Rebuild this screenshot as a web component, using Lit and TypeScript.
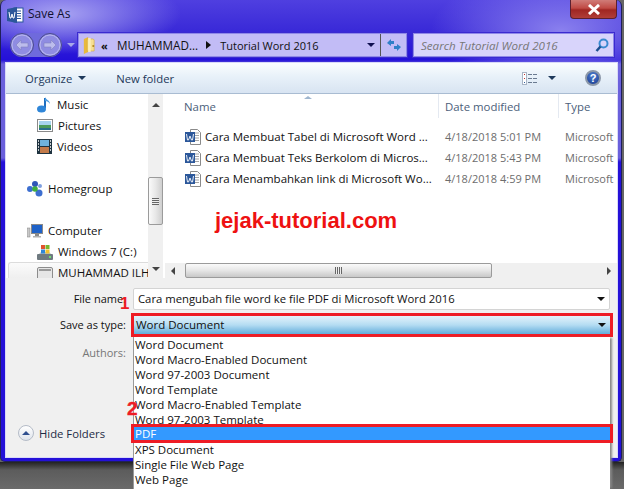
import { LitElement, html, css } from 'lit';
import { customElement } from 'lit/decorators.js';

const wordBadge = html`
  <svg width="17" height="16" viewBox="0 0 17 16">
    <rect x="7" y="1" width="9" height="14" fill="#fff" stroke="#2b579a"/>
    <path d="M9 4h5M9 6.500h5M9 9h5M9 11.500h5" stroke="#2b579a"/>
    <path d="M0 2l10-2v16L0 14z" fill="#2b579a"/>
    <path d="M2 5l1 6h1l1-4 1 4h1l1-6" fill="none" stroke="#fff"/>
  </svg>`;

const docIcon = html`
  <svg width="17" height="16" viewBox="0 0 17 16">
    <path d="M5.500.5h7l3 3v12h-10z" fill="#fff" stroke="#8a8a8a"/>
    <path d="M10 4h4M10 6.500h4M10 9h4M10 11.500h4" stroke="#a4a4a4"/>
    <rect x="0" y="3" width="10" height="10" fill="#2b579a"/>
    <path d="M1.500 5l1 6h1l1.500-4 1.500 4h1l1-6" fill="none" stroke="#fff" stroke-width=".9"/>
  </svg>`;

const folderIcon = html`
  <svg width="12" height="17" viewBox="0 0 14 17" preserveAspectRatio="none">
    <path d="M1 2l5-2v15l-5 2z" fill="#e8b93c"/>
    <path d="M5 2h7l1 1v11H5z" fill="#f6df93" stroke="#d4a62c" stroke-width=".6"/>
    <rect x="6" y="1" width="3" height="14" fill="#fbeeb8"/>
    <rect x="11" y="8" width="2" height="2" fill="#b98f22"/>
  </svg>`;

const musicIcon = html`
  <svg width="15" height="16" viewBox="0 0 15 16">
    <path d="M8 1v10" stroke="#1f6fc0" stroke-width="2"/>
    <path d="M8 0c1 3 5 3 5 7-1-2-3-3-5-3z" fill="#4a9be0"/>
    <ellipse cx="4.500" cy="12" rx="4.500" ry="3.500" fill="#2f86d8"/>
  </svg>`;

const picturesIcon = html`
  <svg width="16" height="13" viewBox="0 0 16 13">
    <rect x=".5" y=".5" width="15" height="12" fill="#fff" stroke="#8a8a8a"/>
    <rect x="2" y="2" width="12" height="5" fill="#a8d4ee"/>
    <rect x="2" y="6" width="12" height="3" fill="#4c9a5a"/>
    <rect x="2" y="9" width="12" height="2" fill="#2a6f8c"/>
  </svg>`;

const videosIcon = html`
  <svg width="15" height="15" viewBox="0 0 15 15">
    <rect width="15" height="15" fill="#1f3340"/>
    <rect x="3" y="1" width="9" height="6" fill="#6fb2dc"/>
    <rect x="3" y="8" width="9" height="6" fill="#c27a4a"/>
    <path d="M1 2h1M1 5h1M1 8h1M1 11h1M13 2h1M13 5h1M13 8h1M13 11h1" stroke="#fff" stroke-width="1.400"/>
  </svg>`;

const homegroupIcon = html`
  <svg width="16" height="16" viewBox="0 0 16 16">
    <circle cx="3" cy="8" r="3" fill="#3d6fd0"/>
    <circle cx="8" cy="3" r="3" fill="#2f55b8"/>
    <circle cx="12" cy="12" r="3.500" fill="#3d6fd0"/>
    <circle cx="8" cy="8" r="2.800" fill="#3fae3f"/>
    <circle cx="13" cy="5" r="2" fill="#7fa0e0"/>
  </svg>`;

const computerIcon = html`
  <svg width="16" height="14" viewBox="0 0 16 14">
    <rect x="0" y="4" width="3" height="9" fill="#c8c8c8" stroke="#808080" stroke-width=".5"/>
    <rect x="4.500" y=".5" width="11" height="9" fill="#1f62c8" stroke="#8a8a8a"/>
    <rect x="8" y="10" width="4" height="2" fill="#8a8a8a"/>
    <rect x="6" y="12" width="8" height="1.500" fill="#b0b0b0"/>
  </svg>`;

const driveIcon = html`
  <svg width="16" height="16" viewBox="0 0 16 16">
    <rect x="0" y="10" width="16" height="6" rx="1" fill="#6f7a80"/>
    <rect x="12" y="12" width="2" height="2" fill="#6fe06f"/>
    <path d="M2 10l2-2h8l2 2z" fill="#b8c0c4"/>
    <rect x="4" y="1" width="4" height="4" fill="#e2532f"/>
    <rect x="8.500" y="1" width="4" height="4" fill="#7ab82e"/>
    <rect x="4" y="5.500" width="4" height="4" fill="#2f86d8"/>
    <rect x="8.500" y="5.500" width="4" height="4" fill="#f2c12e"/>
  </svg>`;

const removableIcon = html`
  <svg width="16" height="16" viewBox="0 0 16 16">
    <rect x=".5" y="2.500" width="15" height="12" rx="1.500" fill="#e6e6e6" stroke="#8c8c8c"/>
    <rect x="2" y="4" width="12" height="2" fill="#9a9a9a"/>
  </svg>`;

const navArrow = (flip: boolean) => html`
  <svg width="24" height="24" viewBox="0 0 24 24">
    <circle cx="12" cy="12" r="11.500" fill="#8f8ce2" stroke="#4a4a8c"/>
    <circle cx="12" cy="12" r="10" fill="none" stroke="#c4c4f0" stroke-width=".8"/>
    <path transform=${flip ? 'matrix(-1 0 0 1 24 0)' : ''}
      d="M6 12l5-5v3h7v4h-7v3z" fill="#bcbcec" stroke="#7f7fc0" stroke-width=".6"/>
  </svg>`;

const navItems = [
  { label: 'Music', icon: musicIcon, level: 1 },
  { label: 'Pictures', icon: picturesIcon, level: 1 },
  { label: 'Videos', icon: videosIcon, level: 1 },
  { label: '', icon: null, level: 0 },
  { label: 'Homegroup', icon: homegroupIcon, level: 0 },
  { label: '', icon: null, level: 0 },
  { label: 'Computer', icon: computerIcon, level: 0 },
  { label: 'Windows 7 (C:)', icon: driveIcon, level: 1 },
  { label: 'MUHAMMAD ILH', icon: removableIcon, level: 1, hover: true },
];

const files = [
  { name: 'Cara Membuat Tabel di Microsoft Word ...', date: '4/18/2018 5:01 PM' },
  { name: 'Cara Membuat Teks Berkolom di Micros...', date: '4/18/2018 5:43 PM' },
  { name: 'Cara Menambahkan link di Microsoft Wo...', date: '4/18/2018 4:59 PM' },
];

const fileTypes = [
  'Word Document',
  'Word Macro-Enabled Document',
  'Word 97-2003 Document',
  'Word Template',
  'Word Macro-Enabled Template',
  'Word 97-2003 Template',
  'PDF',
  'XPS Document',
  'Single File Web Page',
  'Web Page',
];

@customElement('app-root')
export class AppRoot extends LitElement {
  static styles = css`
    :host {
      display: flex;
      flex-direction: column;
      position: relative;
      width: 624px;
      height: 489px;
      overflow: hidden;
      background: #666;
      font-family: 'Open Sans', 'Noto Sans', sans-serif;
      font-size: 11.3px;
      color: #111;
    }

    .window {
      box-sizing: border-box;
      width: 622px;
      height: 462px;
      flex: none;
      display: flex;
      flex-direction: column;
      padding: 0 4px 4px 5px;
      border-radius: 6px 6px 5px 5px;
      border: 1px solid #20205a;
      border-top: 0;
      background:
        radial-gradient(ellipse 120px 40px at 60px 14px, #a9a4f2 0%, rgba(140, 130, 240, 0) 100%),
        radial-gradient(ellipse 130px 60px at 560px 30px, #8a80ee 0%, rgba(120, 110, 235, 0) 100%),
        linear-gradient(180deg, #4f3fe0 0%, #3a2ad8 30px, #2410d8 60px, #6a60dc 64px, #6a60dc 158px, #2410d8 162px);
    }

    .desktop {
      flex: 1;
      background: linear-gradient(180deg, #222 0, #5c5c5c 8px, #6a6a6a 100%);
    }

    .titlebar {
      height: 33px;
      flex: none;
      display: flex;
      align-items: flex-start;
      gap: 4px;
      padding: 7px 0 0 1px;
      box-sizing: border-box;
      position: relative;
    }

    .title {
      font-size: 12px;
      line-height: 14px;
      color: #101030;
    }

    .close {
      position: absolute;
      top: 0;
      right: 0;
      width: 47px;
      height: 19px;
      box-sizing: border-box;
      border: 1px solid #5a2030;
      border-top: 0;
      border-radius: 0 0 4px 4px;
      background: linear-gradient(180deg, #d07c78 0%, #c04a44 45%, #a02622 55%, #b03e38 100%);
      display: flex;
      align-items: center;
      justify-content: center;
    }

    .navrow {
      height: 24px;
      flex: none;
      display: flex;
      align-items: center;
      padding-left: 4px;
    }

    .nav-arrows {
      display: flex;
      gap: 4px;
      border-radius: 12px;
      background: #6f6adc;
    }

    .nav-drop {
      width: 0;
      height: 0;
      margin: 0 3px 0 5px;
      border: 4px solid transparent;
      border-top: 4px solid #a8a8e8;
      border-bottom: 0;
    }

    .address {
      width: 329px;
      height: 24px;
      box-sizing: border-box;
      display: flex;
      align-items: center;
      border: 1px solid #8f88e8;
      outline: 1px solid #3a2ad0;
      background: #c2bcf6;
      padding-left: 4px;
      font-size: 12px;
    }

    .chev {
      margin-left: 6px;
      width: 8px;
      font-size: 11px;
      font-weight: 700;
    }

    .crumb {
      margin-left: 8px;
      font-size: 11.7px;
    }

    .tri-right {
      width: 0;
      height: 0;
      margin-left: 8px;
      border: 4px solid transparent;
      border-left: 5px solid #111;
      border-right: 0;
    }

    .crumb-last {
      margin-left: 9px;
      font-size: 11px;
    }

    .addr-drop {
      width: 0;
      height: 0;
      margin-left: auto;
      border: 4px solid transparent;
      border-top: 4px solid #101050;
      border-bottom: 0;
      transform: translateX(-5px);
    }

    .refresh {
      width: 25px;
      height: 22px;
      border-left: 1px solid #555;
      display: flex;
      align-items: center;
      justify-content: center;
    }

    .search {
      width: 201px;
      height: 24px;
      margin-left: 6px;
      box-sizing: border-box;
      display: flex;
      align-items: center;
      justify-content: space-between;
      padding: 0 4px 0 7px;
      border: 1px solid #8f88e8;
      outline: 1px solid #3a2ad0;
      background: #d8d4fb;
      color: #777;
      font-style: italic;
      font-size: 11.6px;
    }

    .client {
      flex: 1;
      min-height: 0;
      margin-top: 6px;
      display: flex;
      flex-direction: column;
      background: #f0f0f0;
      outline: 1px solid #d8d8f8;
    }

    .toolbar {
      height: 31px;
      flex: none;
      box-sizing: border-box;
      display: flex;
      align-items: center;
      padding-left: 19px;
      background: linear-gradient(180deg, #fafdff 0%, #e8f1f9 45%, #d8e4f2 100%);
      border-bottom: 1px solid #a9bcd2;
      color: #1e395b;
    }

    .caret {
      width: 0;
      height: 0;
      margin-left: 6px;
      border: 4px solid transparent;
      border-top: 4px solid #1e395b;
      border-bottom: 0;
    }

    .new-folder {
      margin-left: 30px;
    }

    .view {
      margin-left: auto;
      display: flex;
      align-items: center;
    }

    .view .caret {
      margin-left: 10px;
    }

    .help {
      margin: 0 16px 0 29px;
      width: 16px;
      height: 16px;
      border-radius: 50%;
      box-sizing: border-box;
      border: 2px solid #8b97a8;
      background: radial-gradient(circle at 50% 30%, #4f7fd0, #17398f);
      color: #fff;
      font: 700 11px/12px 'Liberation Sans', sans-serif;
      text-align: center;
    }

    .panes {
      height: 184px;
      flex: none;
      display: flex;
      background: #fff;
    }

    .nav-pane {
      width: 142px;
      flex: none;
      overflow: hidden;
      box-sizing: border-box;
    }

    .nav-item {
      height: 21px;
      display: flex;
      align-items: center;
      gap: 5px;
      font-size: 11.5px;
      white-space: nowrap;
    }

    .nav-item svg {
      flex: none;
    }

    .level-0 {
      padding-left: 21px;
    }

    .level-1 {
      padding-left: 31px;
    }

    .hover {
      margin-left: 2px;
      padding-left: 28px;
      border: 1px solid #dcdcdc;
      border-right: 0;
      border-radius: 3px 0 0 3px;
      box-sizing: border-box;
      background: linear-gradient(180deg, #fbfbfb, #ececec);
    }

    .vscroll {
      width: 15px;
      flex: none;
      margin-right: 2px;
      background: #f0f0f0;
      position: relative;
      display: flex;
      flex-direction: column;
      align-items: center;
      justify-content: space-between;
      padding: 9px 0 7px;
      box-sizing: border-box;
    }

    .up,
    .down {
      width: 0;
      height: 0;
      border: 4px solid transparent;
    }

    .up {
      border-bottom: 4px solid #444;
      border-top: 0;
    }

    .down {
      border-top: 4px solid #444;
      border-bottom: 0;
    }

    .vthumb {
      position: absolute;
      top: 83px;
      left: 0;
      width: 15px;
      height: 48px;
      box-sizing: border-box;
      border: 1px solid #9b9b9b;
      border-radius: 2px;
      background: linear-gradient(90deg, #fafafa, #e8e8e8 50%, #cfcfcf);
      display: flex;
      align-items: center;
      justify-content: center;
    }

    .grip-h {
      width: 7px;
      height: 7px;
      background: repeating-linear-gradient(180deg, #666 0 1px, #eee 1px 2px);
    }

    .files {
      flex: 1;
      min-width: 0;
      display: flex;
      flex-direction: column;
    }

    .grid {
      display: grid;
      grid-template-columns: 273px 120px 1fr;
    }

    .head {
      height: 24px;
      flex: none;
      color: #4c607a;
      font-size: 11.4px;
    }

    .head > div {
      display: flex;
      align-items: center;
      padding-left: 6px;
      position: relative;
    }

    .head > div + div {
      border-left: 1px solid #e4e9f1;
    }

    .head > div:first-child {
      padding-left: 19px;
    }

    .sort {
      position: absolute;
      top: 2px;
      left: 139px;
      width: 0;
      height: 0;
      border: 4px solid transparent;
      border-bottom: 3px solid #9fb6cf;
      border-top: 0;
    }

    .list {
      flex: 1;
      min-height: 0;
      padding-top: 8px;
    }

    .row {
      height: 21px;
      align-items: center;
      color: #6d6d6d;
      white-space: nowrap;
      font-size: 11px;
    }

    .row > div {
      overflow: hidden;
      padding-left: 7px;
    }

    .row .name {
      display: flex;
      align-items: center;
      gap: 3px;
      padding-left: 20px;
      color: #111;
      font-size: 11.5px;
    }

    .hscroll {
      height: 15px;
      flex: none;
      display: flex;
      align-items: center;
      background: #f0f0f0;
    }

    .left,
    .right {
      width: 0;
      height: 0;
      border: 4px solid transparent;
    }

    .left {
      margin-left: 6px;
      border-right: 4px solid #444;
      border-left: 0;
    }

    .right {
      margin-left: auto;
      margin-right: 6px;
      border-left: 4px solid #444;
      border-right: 0;
    }

    .hthumb {
      margin-left: 10px;
      width: 307px;
      height: 15px;
      box-sizing: border-box;
      border: 1px solid #9b9b9b;
      border-radius: 2px;
      background: linear-gradient(180deg, #fafafa, #e6e6e6 50%, #c8c8c8);
      display: flex;
      align-items: center;
      justify-content: center;
    }

    .grip-v {
      width: 7px;
      height: 7px;
      background: repeating-linear-gradient(90deg, #666 0 1px, #eee 1px 2px);
    }

    .form {
      flex: 1;
      min-height: 0;
      display: flex;
      flex-direction: column;
      padding: 10px 7px 16px 0;
    }

    .form-grid {
      display: grid;
      grid-template-columns: 120px 1fr;
      column-gap: 7px;
      row-gap: 6px;
      align-items: center;
    }

    .label {
      text-align: right;
      font-size: 11px;
      padding-bottom: 2px;
    }

    .muted {
      color: #777;
      margin-top: 5px;
    }

    .filename {
      height: 22px;
      box-sizing: border-box;
      display: flex;
      align-items: center;
      justify-content: space-between;
      padding: 0 4px 0 4px;
      background: #fff;
      border: 1px solid #d4d4d4;
      border-radius: 2px;
    }

    .filename .text,
    .combo .text {
      padding-bottom: 2px;
    }

    .filename .down,
    .combo .down {
      border-top-color: #111;
    }

    .combo {
      position: relative;
      height: 18px;
      margin-left: 1px;
      box-sizing: border-box;
      display: flex;
      align-items: center;
      justify-content: space-between;
      padding: 0 4px 0 2px;
      background: linear-gradient(180deg, #e4f3fb 0%, #b4dcf2 50%, #62addb 100%);
      outline: 3px solid #ee1c25;
      font-size: 11.5px;
    }

    .menu {
      position: absolute;
      top: 21px;
      left: -1px;
      right: 0;
      height: 152px;
      box-sizing: border-box;
      background: #fff;
      border-left: 1px solid #9a9a9a;
      box-shadow: 3px 0 2px -1px #888;
      z-index: 2;
    }

    .menu div {
      height: 15px;
      line-height: 15px;
      padding-left: 1px;
      font-size: 11.5px;
      white-space: nowrap;
    }

    .menu .pdf {
      height: 13px;
      line-height: 13px;
      margin-bottom: 2px;
      background: #3399ff;
      color: #fff;
      outline: 3px solid #ee1c25;
      position: relative;
    }

    .hide {
      margin-top: auto;
      margin-left: 12px;
      display: flex;
      align-items: center;
      gap: 5px;
      color: #1e2b45;
    }

    .hide-btn {
      width: 16px;
      height: 16px;
      border-radius: 50%;
      box-sizing: border-box;
      border: 1px solid #b5bcc8;
      background: linear-gradient(180deg, #fff, #dfe4ec);
      display: flex;
      align-items: center;
      justify-content: center;
    }

    .hide-btn i {
      width: 0;
      height: 0;
      border: 4px solid transparent;
      border-bottom: 4px solid #2f4f8f;
      border-top: 0;
    }

    .stamp {
      position: absolute;
      z-index: 3;
      top: 208px;
      left: 215px;
      font: 700 22px/26px 'Liberation Sans', sans-serif;
      color: #ee1111;
    }

    .num {
      position: absolute;
      z-index: 3;
      font: 700 17px/17px 'Liberation Sans', sans-serif;
      color: #ee1c25;
    }

    .num-1 {
      top: 295px;
      left: 120px;
    }

    .num-2 {
      top: 400px;
      left: 127px;
      font-size: 19px;
      -webkit-text-stroke: 0.4px #ee1c25;
    }
  `;

  render() {
    return html`
      <div class="window">
        <div class="titlebar">
          ${wordBadge}
          <span class="title">Save As</span>
          <div class="close">
            <svg width="14" height="11" viewBox="0 0 14 11">
              <path d="M2 1l10 9M12 1L2 10" stroke="#fff" stroke-width="3"/>
            </svg>
          </div>
        </div>

        <div class="navrow">
          <div class="nav-arrows">${navArrow(false)}${navArrow(true)}</div>
          <span class="nav-drop"></span>
          <div class="address">
            ${folderIcon}
            <span class="chev">«</span>
            <span class="crumb">MUHAMMAD...</span>
            <span class="tri-right"></span>
            <span class="crumb-last">Tutorial Word 2016</span>
            <span class="addr-drop"></span>
            <span class="refresh">
              <svg width="16" height="16" viewBox="0 0 16 16">
                <path d="M1 6l4-4v2h3v3H5v2z" fill="#2f7fc8"/>
                <path d="M15 10l-4 4v-2H8V9h3V7z" fill="#2f7fc8"/>
              </svg>
            </span>
          </div>
          <div class="search">
            <span>Search Tutorial Word 2016</span>
            <svg width="14" height="15" viewBox="0 0 14 15">
              <circle cx="8.500" cy="5.500" r="4" fill="none" stroke="#3a8ad0" stroke-width="2"/>
              <path d="M5.500 8.500L1.500 13" stroke="#1c4f8f" stroke-width="2.500"/>
            </svg>
          </div>
        </div>

        <div class="client">
          <div class="toolbar">
            <span>Organize</span>
            <span class="caret"></span>
            <span class="new-folder">New folder</span>
            <div class="view">
              <svg width="16" height="13" viewBox="0 0 16 13">
                <rect x=".5" y=".5" width="4" height="12" fill="#fff" stroke="#a8b4c4"/>
                <path d="M2 2.500h1M2 6.500h1" stroke="#c03030"/>
                <path d="M2 10.500h1" stroke="#3060a0"/>
                <path d="M6 2.500h4M11 2.500h4M6 6.500h4M11 6.500h4M6 10.500h4M11 10.500h4" stroke="#6a7a90"/>
              </svg>
              <span class="caret"></span>
            </div>
            <div class="help">?</div>
          </div>

          <div class="panes">
            <div class="nav-pane">
              ${navItems.map(
                (item) => html`
                  <div class="nav-item level-${item.level} ${item.hover ? 'hover' : ''}">
                    ${item.icon}<span>${item.label}</span>
                  </div>
                `
              )}
            </div>
            <div class="vscroll">
              <span class="up"></span>
              <div class="vthumb"><span class="grip-h"></span></div>
              <span class="down"></span>
            </div>
            <div class="files">
              <div class="grid head">
                <div>Name<span class="sort"></span></div>
                <div>Date modified</div>
                <div>Type</div>
              </div>
              <div class="list">
                ${files.map(
                  (f) => html`
                    <div class="grid row">
                      <div class="name">${docIcon}<span>${f.name}</span></div>
                      <div>${f.date}</div>
                      <div>Microsoft</div>
                    </div>
                  `
                )}
              </div>
              <div class="hscroll">
                <span class="left"></span>
                <div class="hthumb"><span class="grip-v"></span></div>
                <span class="right"></span>
              </div>
            </div>
          </div>

          <div class="form">
            <div class="form-grid">
              <div class="label">File name:</div>
              <div class="filename">
                <span class="text">Cara mengubah file word ke file PDF di Microsoft Word 2016</span>
                <span class="down"></span>
              </div>
              <div class="label">Save as type:</div>
              <div class="combo">
                <span class="text">Word Document</span>
                <span class="down"></span>
                <div class="menu">
                  ${fileTypes.map((t) => html`<div class=${t === 'PDF' ? 'pdf' : ''}>${t}</div>`)}
                </div>
              </div>
              <div class="label muted">Authors:</div>
              <div></div>
            </div>
            <div class="hide">
              <span class="hide-btn"><i></i></span>
              <span>Hide Folders</span>
            </div>
          </div>
        </div>
      </div>
      <div class="desktop"></div>
      <div class="stamp">jejak-tutorial.com</div>
      <div class="num num-1">1</div>
      <div class="num num-2">2</div>
    `;
  }
}
